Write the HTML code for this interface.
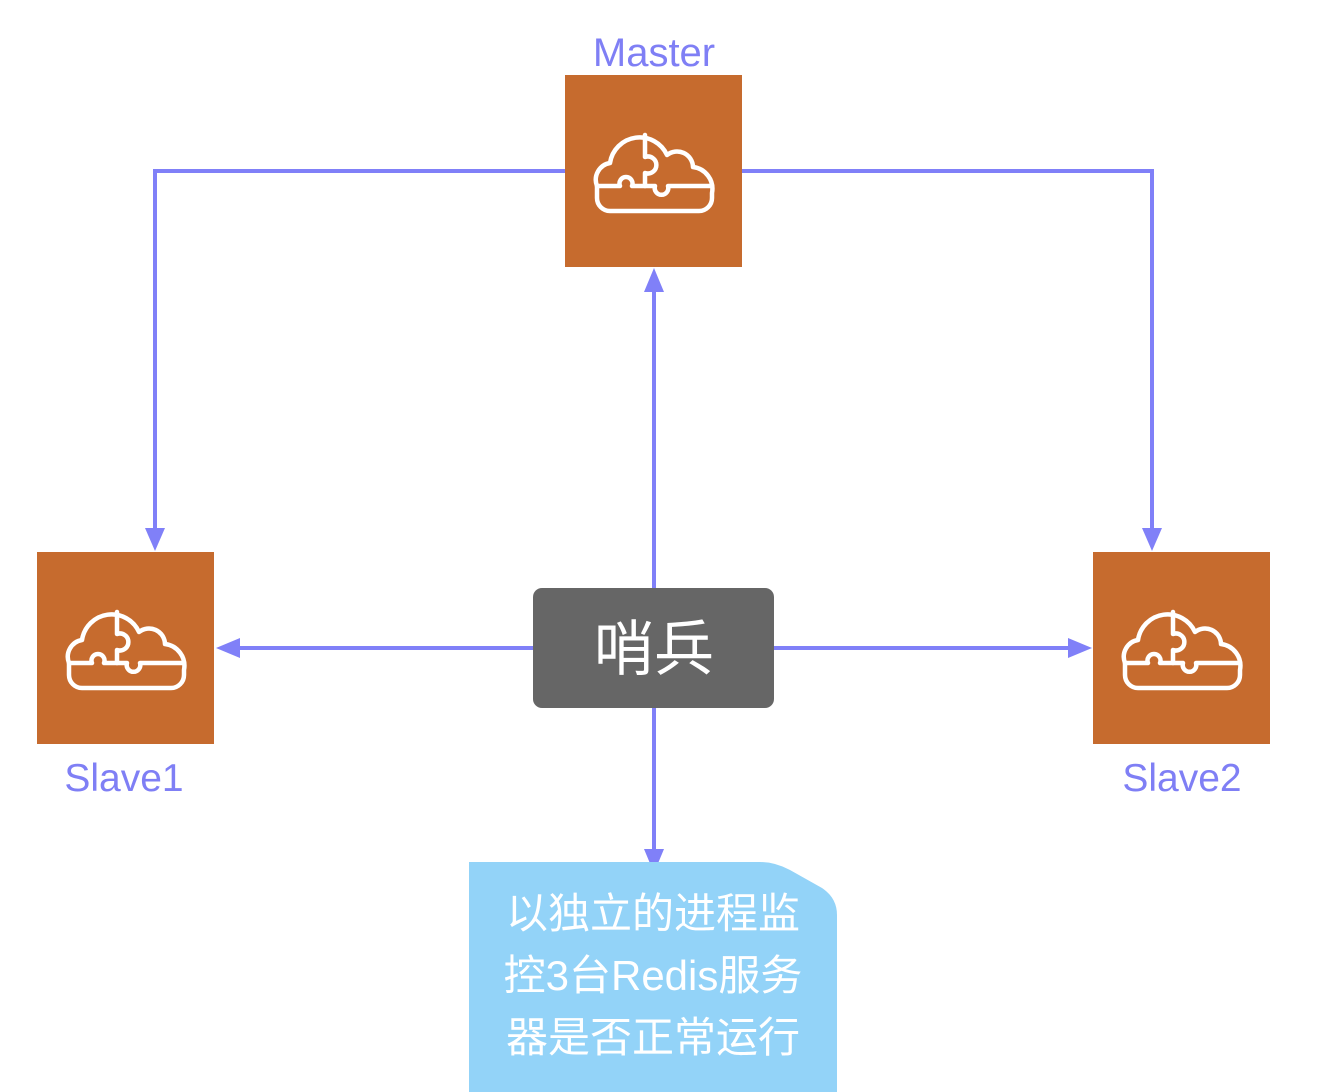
<!DOCTYPE html>
<html><head><meta charset="utf-8"><style>
html,body{margin:0;padding:0;background:#fff;width:1324px;height:1092px;overflow:hidden}
svg{display:block}
text{font-family:"Liberation Sans","Noto Sans CJK SC",sans-serif}
</style></head><body>
<svg width="1324" height="1092" viewBox="0 0 1324 1092" xmlns="http://www.w3.org/2000/svg">
<defs>
<g id="ic">
<rect x="0" y="0" width="177" height="192" fill="#c66b2e"/>
<g fill="none" stroke="#fff" stroke-width="4.5" stroke-linejoin="round" stroke-linecap="round">
<path d="M45,136 H134 A13,13 0 0 0 147,123 V118 A22,22 0 0 0 128,92 A16,16 0 0 0 102,80 A30,30 0 0 0 45,88 A17,17 0 0 0 32,111 V123 A13,13 0 0 0 45,136 Z"/>
<path d="M32,111 H55 A6.5,6.5 0 1 1 67,111 H80 V98 A8.5,8.5 0 1 0 80,82 V60"/>
<path d="M80,111 H90 A6.8,6.8 0 1 0 103,111 H147"/>
</g>
</g>
</defs>
<g stroke="#8080f8" stroke-width="4" fill="none">
<path d="M565,171 H155 V535"/>
<path d="M742,171 H1152 V535"/>
<path d="M654,588 V285"/>
<path d="M533,648 H232"/>
<path d="M774,648 H1076"/>
<path d="M654,708 V856"/>
</g>
<g fill="#8080f8">
<path d="M145,528 L165,528 L155,551 Z"/>
<path d="M1142,528 L1162,528 L1152,551 Z"/>
<path d="M644,292 L664,292 L654,268 Z"/>
<path d="M240,638 L240,658 L216,648 Z"/>
<path d="M1068,638 L1068,658 L1092,648 Z"/>
<path d="M644,849 L664,849 L654,873 Z"/>
</g>
<use href="#ic" x="565" y="75"/>
<use href="#ic" x="37" y="552"/>
<use href="#ic" x="1093" y="552"/>
<text x="654" y="66" text-anchor="middle" font-size="40" fill="#7f7ff5">Master</text>
<text x="124" y="791" text-anchor="middle" font-size="39" fill="#7f7ff5">Slave1</text>
<text x="1182" y="791" text-anchor="middle" font-size="39" fill="#7f7ff5">Slave2</text>
<rect x="533" y="588" width="241" height="120" rx="9" fill="#666666"/>
<text x="654" y="670" text-anchor="middle" font-size="60" fill="#fff">哨兵</text>
<path d="M469,862 H760 Q775,862 790,870 L822,888 Q837,898 837,915 V1092 H469 Z" fill="#93d3f8"/>
<g font-size="42" fill="#fff" text-anchor="middle">
<text x="653" y="928">以独立的进程监</text>
<text x="653" y="990">控3台Redis服务</text>
<text x="653" y="1052">器是否正常运行</text>
</g>
</svg>
</body></html>
